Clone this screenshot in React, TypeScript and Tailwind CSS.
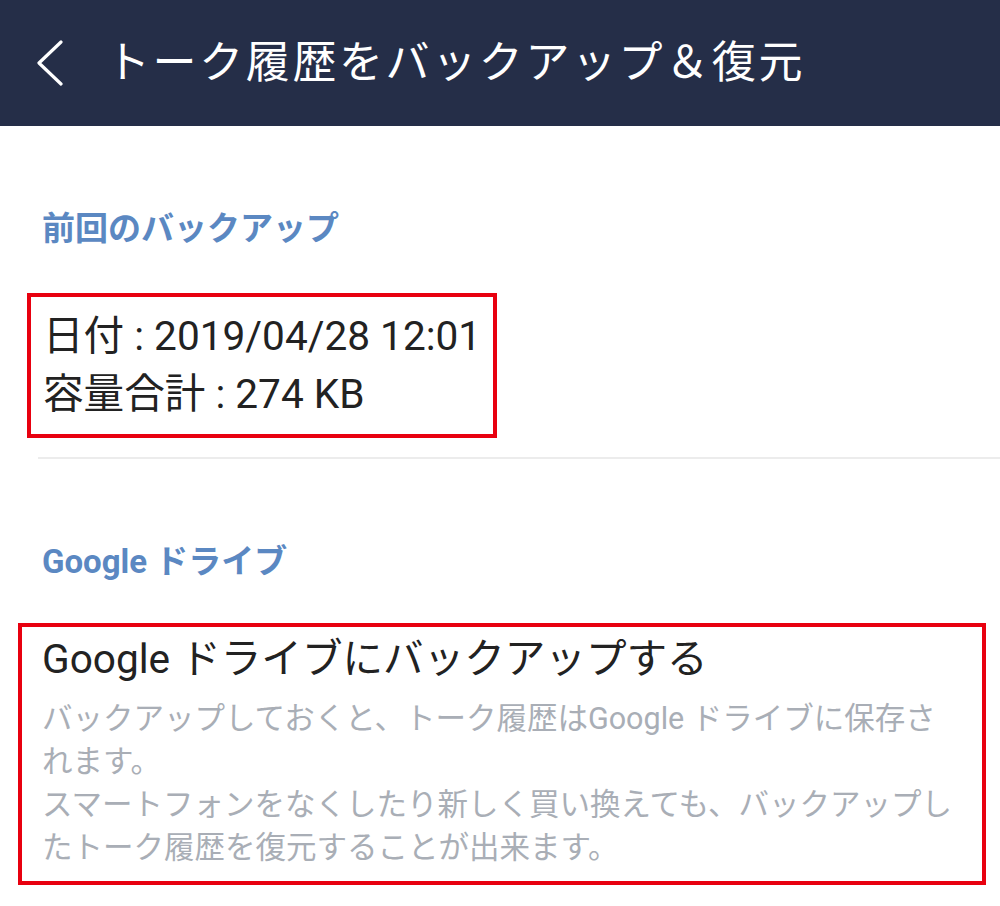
import * as React from "react";

const font = {
  fontFamily: '"Roboto", "Noto Sans CJK JP", sans-serif',
};

const BackIcon: React.FC = () => (
  <svg width="30" height="46" viewBox="0 0 30 46" fill="none" className="shrink-0">
    <path
      d="M25 2 L3 23 L25 44"
      stroke="#ffffff"
      strokeWidth="3.2"
      strokeLinecap="round"
      strokeLinejoin="round"
    />
  </svg>
);

const SectionTitle: React.FC<{ children: React.ReactNode; className?: string }> = ({
  children,
  className = "",
}) => (
  <h2 className={`pl-[42px] text-[33px] leading-[40px] font-bold text-[#5b88c2] ${className}`}>
    {children}
  </h2>
);

export default function App() {
  return (
    <div className="w-[1000px] h-[906px] bg-white overflow-hidden" style={font}>
      <header className="h-[126px] bg-[#252e48] flex items-center pl-[36px]">
        <BackIcon />
        <h1 className="ml-[40px] text-[44px] leading-none tracking-[2.6px] text-white font-normal">
          トーク履歴をバックアップ＆復元
        </h1>
      </header>

      <main>
        <SectionTitle className="pt-[83px]">前回のバックアップ</SectionTitle>

        <div className="ml-[27px] mt-[44px] w-[470px] h-[145px] border-[4px] border-[#e8000f] pl-[12px] pt-[10px] text-[40.6px] leading-[58px] text-[#222222]">
          <p>日付 : 2019/04/28 12:01</p>
          <p>容量合計 : 274 KB</p>
        </div>

        <div className="ml-[38px] mt-[19px] h-[2px] bg-[#ececec]" />

        <SectionTitle className="mt-[83px]">Google ドライブ</SectionTitle>

        <div className="ml-[18px] mt-[41px] w-[968px] h-[262px] border-[4px] border-[#e8000f] pl-[20px] pt-[8px]">
          <p className="text-[40.6px] leading-[48px] text-[#222222]">
            Google ドライブにバックアップする
          </p>
          <p className="mt-[14px] text-[30.5px] leading-[43px] text-[#a9aeb6]">
            バックアップしておくと、トーク履歴はGoogle ドライブに保存さ
            <br />
            れます。
            <br />
            スマートフォンをなくしたり新しく買い換えても、バックアップし
            <br />
            たトーク履歴を復元することが出来ます。
          </p>
        </div>
      </main>
    </div>
  );
}
